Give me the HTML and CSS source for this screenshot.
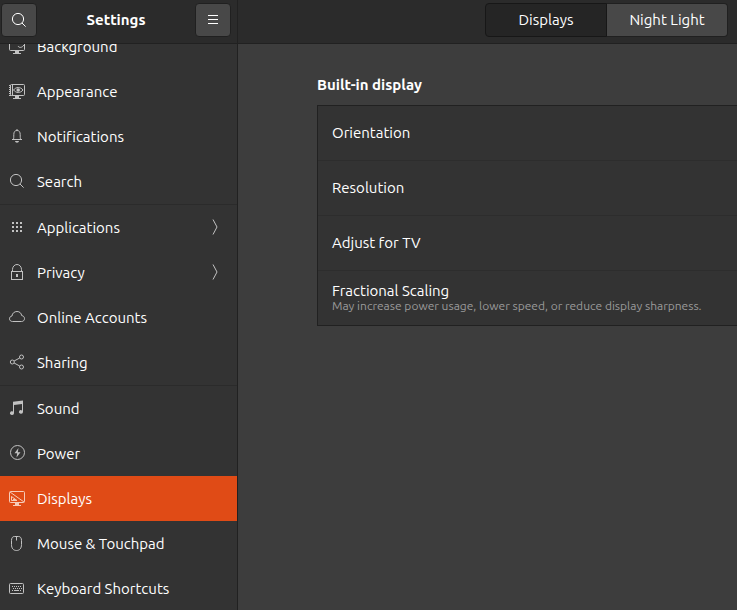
FILE: index.html
```html
<!DOCTYPE html>
<html lang="en">
<head>
    <meta charset="UTF-8">
    <meta name="viewport" content="width=device-width, initial-scale=1">
    <title>Settings</title>
    <link rel="stylesheet" href="styles.css">
</head>
<body>
<div class="window">
    <aside class="sidebar">
        <header class="titlebar sidebar-bar">
            <button type="button" class="icon-btn" aria-label="Search">
                <svg width="16" height="16" viewBox="0 0 16 16"><circle cx="7" cy="7" r="5.6"/><path d="M11 11l3.6 3.6"/></svg>
            </button>
            <h1>Settings</h1>
            <button type="button" class="icon-btn" aria-label="Menu">
                <svg width="16" height="16" viewBox="0 0 16 16"><path d="M3 3.5h10M3 7.5h10M3 11.5h10"/></svg>
            </button>
        </header>
        <nav class="panels">
            <ul>
                <li><a href="#background">
                    <svg width="16" height="16" viewBox="0 0 16 16"><path d="M6.5 1.5h-5a1 1 0 0 0-1 1v9a1 1 0 0 0 1 1h13a1 1 0 0 0 1-1v-9a1 1 0 0 0-1-1h-5"/><path d="M9 8c1 2 4 2 6-1"/><path class="fill" d="M6 13h4v2h2v1H4v-1h2z"/></svg>
                    <span>Background</span>
                </a></li>
                <li><a href="#appearance">
                    <svg width="16" height="16" viewBox="0 0 16 16"><rect x="1.5" y="1.5" width="14" height="11" rx="1"/><path d="M3.5 1.5v11"/><path class="dash" d="M1 2v11"/><path d="M4.500 7c2.500-3.300 7-3.300 9.500 0c-2.500 3.300-7 3.300-9.500 0z"/><circle class="fill" cx="9.200" cy="7" r="1.800"/><path class="fill" d="M6 13h4v2h2v1H4v-1h2z"/></svg>
                    <span>Appearance</span>
                </a></li>
                <li><a href="#notifications">
                    <svg width="16" height="16" viewBox="0 0 16 16"><path d="M3 11.500h10M4.500 11c.3-1 .3-2 .3-4.500c0-2.500 1-4 3.200-4s3.200 1.500 3.200 4c0 2.500 0 3.500.3 4.500M8 1v1.500"/><path class="fill" d="M6 13h4c-.3 2.300-3.700 2.300-4 0z"/></svg>
                    <span>Notifications</span>
                </a></li>
                <li><a href="#search">
                    <svg width="16" height="16" viewBox="0 0 16 16"><circle cx="7" cy="7" r="5.600"/><path d="M11 11l3.600 3.600"/></svg>
                    <span>Search</span>
                </a></li>
            </ul>
            <ul>
                <li><a href="#applications">
                    <svg width="16" height="16" viewBox="0 0 16 16"><path class="fill" d="M3 3h2v2H3zM7 3h2v2H7zM11 3h2v2h-2zM3 7h2v2H3zM7 7h2v2H7zM11 7h2v2h-2zM3 11h2v2H3zM7 11h2v2H7zM11 11h2v2h-2z"/></svg>
                    <span>Applications</span>
                    <svg class="arrow" width="16" height="16" viewBox="0 0 16 16"><path d="M6 .5l4 7.500l-4 7.500"/></svg>
                </a></li>
                <li><a href="#privacy">
                    <svg width="16" height="16" viewBox="0 0 16 16"><rect x="2.500" y="7.500" width="11" height="8"/><path d="M3.500 7.500V5.500a4.500 5 0 0 1 9 0v2"/><path class="fill" d="M7 10h2v3H7z"/></svg>
                    <span>Privacy</span>
                    <svg class="arrow" width="16" height="16" viewBox="0 0 16 16"><path d="M6 .5l4 7.500l-4 7.500"/></svg>
                </a></li>
                <li><a href="#online-accounts">
                    <svg width="16" height="16" viewBox="0 0 16 16"><path d="M3.500 12.500c-1.800 0-3-1.200-3-2.700c0-1.600 1.100-2.600 2.500-2.800C3.200 4.200 5.500 2.500 8 2.500c2.700 0 4.300 1.700 4.700 4.100c1.700.2 2.800 1.400 2.800 3c0 1.700-1.200 2.900-3 2.900z"/></svg>
                    <span>Online Accounts</span>
                </a></li>
                <li><a href="#sharing">
                    <svg width="16" height="16" viewBox="0 0 16 16"><circle cx="3.300" cy="8" r="2"/><circle cx="12.500" cy="3" r="2"/><circle cx="12.500" cy="13" r="2"/><path d="M5.100 7l5.600-3M5.100 9l5.600 3"/></svg>
                    <span>Sharing</span>
                </a></li>
            </ul>
            <ul>
                <li><a href="#sound">
                    <svg width="16" height="16" viewBox="0 0 16 16"><path class="fill" d="M4 1.800L14 .5v11.500a2 1.800 0 1 1-1-1.600V4L5 5v8.200a2 1.800 0 1 1-1-1.600z"/></svg>
                    <span>Sound</span>
                </a></li>
                <li><a href="#power">
                    <svg width="16" height="16" viewBox="0 0 16 16"><circle cx="8.500" cy="7.500" r="7"/><path class="fill" d="M9.500 3L5.500 8.300h2.700L7.500 12.500l4-5.300H8.800z"/></svg>
                    <span>Power</span>
                </a></li>
                <li><a href="#displays" class="active" aria-current="page">
                    <svg width="16" height="16" viewBox="0 0 16 16"><rect x=".5" y="1.500" width="15" height="11" rx="1"/><path d="M1 2l14 10M2.500 6.500v4h5.500zM4 9.500h2"/><path class="fill" d="M6 13h4v2h2v1H4v-1h2z"/></svg>
                    <span>Displays</span>
                </a></li>
                <li><a href="#mouse">
                    <svg width="16" height="16" viewBox="0 0 16 16"><path d="M5.500 1.500h4c2 0 3 1.500 3 4v4c0 4-2 6-5 6s-5-2-5-6v-4c0-2.500 1-4 3-4zM7.500 1.500v4"/></svg>
                    <span>Mouse &amp; Touchpad</span>
                </a></li>
                <li><a href="#keyboard">
                    <svg width="16" height="16" viewBox="0 0 16 16"><rect x=".5" y="3.500" width="14" height="10" rx="1"/><path class="keys" d="M3 6.500h10M4 8.500h9"/><path d="M3 10.500h1M5 10.500h5M11 10.500h1"/></svg>
                    <span>Keyboard Shortcuts</span>
                </a></li>
            </ul>
        </nav>
    </aside>
    <main class="content">
        <header class="titlebar content-bar">
            <div class="switcher">
                <button type="button" class="selected" aria-pressed="true">Displays</button>
                <button type="button" aria-pressed="false">Night Light</button>
            </div>
        </header>
        <section class="page">
            <h2>Built-in display</h2>
            <ul class="rows">
                <li>Orientation</li>
                <li>Resolution</li>
                <li>Adjust for TV</li>
                <li>Fractional Scaling<small>May increase power usage, lower speed, or reduce display sharpness.</small></li>
            </ul>
        </section>
    </main>
</div>
</body>
</html>
```
FILE: styles.css
```css
*{
    box-sizing:border-box;
    padding:0;
    margin:0;
}
body{
    font-family:Ubuntu,"Noto Sans","Open Sans",sans-serif;
    font-size:15px;
    font-variant-ligatures:none;
    line-height:20px;
    color:#fff;
    background:#3d3d3d;
}
ul{
    list-style:none;
}
a{
    color:inherit;
    text-decoration:none;
}
button{
    font:inherit;
    color:inherit;
    background:#484848;
    border:1px solid #202020;
}
svg{
    flex:none;
    fill:none;
    stroke:currentColor;
}
svg .fill{
    fill:currentColor;
    stroke:none;
}
svg .dash{
    stroke-width:2;
    stroke-dasharray:1 1;
}
svg .keys{
    stroke-dasharray:1 1;
}
.window{
    display:flex;
    height:100vh;
    overflow:hidden;
}
.titlebar{
    display:flex;
    align-items:center;
    flex:none;
    height:44px;
    padding-bottom:3px;
    background:#2b2b2b;
    border-bottom:1px solid #212121;
}
/* sidebar */
.sidebar{
    display:flex;
    flex-direction:column;
    flex:none;
    width:238px;
    background:#333;
    border-right:1px solid #212121;
}
.sidebar-bar{
    justify-content:space-between;
    padding-left:1px;
    padding-right:6px;
}
.sidebar-bar h1{
    font-size:15px;
    line-height:20px;
}
.icon-btn{
    display:flex;
    align-items:center;
    justify-content:center;
    width:36px;
    height:34px;
    border-radius:4px;
}
.panels{
    flex:1;
    min-height:0;
    overflow:hidden;
}
/* list is scrolled a little, first row goes under the bar */
.panels ul:first-child{
    margin-top:-20px;
}
.panels ul + ul{
    border-top:1px solid #2b2b2b;
}
.panels a{
    display:flex;
    align-items:center;
    gap:12px;
    height:45px;
    padding:0 14px 0 9px;
}
.panels a svg{
    margin-bottom:1px;
    color:#c2c2c2;
}
.panels .arrow{
    margin-left:auto;
}
.panels a.active{
    background:#e04b16;
}
.panels a.active svg{
    color:#f6cbb9;
}
/* content */
.content{
    display:flex;
    flex-direction:column;
    flex:1;
    min-width:0;
}
.content-bar{
    justify-content:flex-end;
    padding-right:9px;
}
.switcher{
    display:flex;
}
.switcher button{
    width:121px;
    height:34px;
    border-radius:0 4px 4px 0;
    border-left:0;
}
.switcher .selected{
    width:122px;
    background:#252525;
    border:1px solid #171717;
    border-radius:4px 0 0 4px;
}
.page{
    padding:31px 0 0 79px;
}
.page h2{
    font-size:15px;
    line-height:20px;
    margin-bottom:10px;
}
.rows{
    background:#333;
    border:1px solid #212121;
    border-right:0;
}
.rows li{
    display:flex;
    flex-direction:column;
    justify-content:center;
    height:54px;
    padding:0 14px;
    line-height:18px;
}
.rows li + li{
    height:55px;
    border-top:1px solid #2d2d2d;
}
.rows small{
    margin-bottom:2px;
    font-size:12px;
    line-height:12px;
    color:#9a9a9a;
    white-space:nowrap;
}
```
